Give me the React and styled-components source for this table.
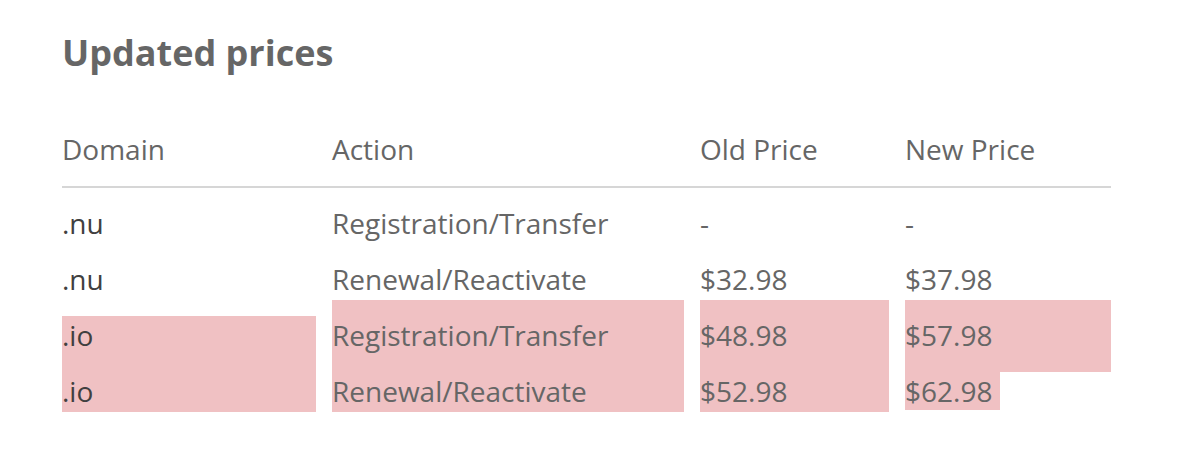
import React from 'react'
import styled, { createGlobalStyle } from 'styled-components'

const GlobalStyle = createGlobalStyle`
  html, body {
    margin: 0;
    padding: 0;
    background: #fff;
  }
  body {
    font-family: "Open Sans", "Liberation Sans", sans-serif;
    color: #666;
  }
`

const MARK = '#f0c1c3'

const rows = [
  { domain: '.nu', action: 'Registration/Transfer', oldPrice: '-', newPrice: '-' },
  { domain: '.nu', action: 'Renewal/Reactivate', oldPrice: '$32.98', newPrice: '$37.98' },
  {
    domain: '.io', action: 'Registration/Transfer', oldPrice: '$48.98', newPrice: '$57.98',
    marks: ['fromText', 'full', 'full', 'spill']
  },
  {
    domain: '.io', action: 'Renewal/Reactivate', oldPrice: '$52.98', newPrice: '$62.98',
    marks: ['full', 'full', 'full', 'tail']
  }
]

const Page = styled.div`
  padding: 29px 0 0 62px;
`

const Title = styled.h2`
  margin: 0;
  font-size: 36px;
  line-height: 48px;
  font-weight: 700;
  color: #666;
`

const Table = styled.div`
  width: 1049px;
  margin-top: 37px;
`

const Row = styled.div`
  display: grid;
  grid-template-columns: 254px 352px 189px 206px;
  column-gap: 16px;
`

const HeadRow = styled(Row)`
  padding-bottom: 16px;
  border-bottom: 2px solid #d6d6d6;
`

const Cell = styled.div`
  position: relative;
  height: 56px;
  box-sizing: border-box;
  padding-top: 16px;
  font-size: 28px;
  line-height: 38px;
  white-space: nowrap;
  color: ${({ $dark }) => ($dark ? '#404040' : '#666')};
  background: ${({ $mark }) => {
    if ($mark === 'full') return MARK
    if ($mark === 'fromText') return `linear-gradient(to bottom, transparent 16px, ${MARK} 16px)`
    if ($mark === 'tail') return `linear-gradient(to bottom, ${MARK} 16px, transparent 16px)`
    return 'transparent'
  }};
`

/* the selection of the third row runs down into the next one */
const Spill = styled.span`
  position: absolute;
  left: 0;
  right: 0;
  top: 0;
  height: 72px;
  background: ${MARK};
  z-index: 0;
`

const Text = styled.span`
  position: relative;
  z-index: 1;
  padding-right: ${({ $mark }) => ($mark ? '8px' : '0')};
  background: ${({ $mark }) => ($mark ? MARK : 'transparent')};
`

export default function App() {
  return (
    <>
      <GlobalStyle />
      <Page>
        <Title>Updated prices</Title>
        <Table>
          <HeadRow>
            <Cell>Domain</Cell>
            <Cell>Action</Cell>
            <Cell>Old Price</Cell>
            <Cell>New Price</Cell>
          </HeadRow>
          {rows.map((row, i) => {
            const marks = row.marks || []
            const values = [row.domain, row.action, row.oldPrice, row.newPrice]
            return (
              <Row key={i}>
                {values.map((value, j) => (
                  <Cell key={j} $dark={j === 0} $mark={marks[j]}>
                    {marks[j] === 'spill' && <Spill />}
                    <Text $mark={marks[j] === 'tail'}>{value}</Text>
                  </Cell>
                ))}
              </Row>
            )
          })}
        </Table>
      </Page>
    </>
  )
}
